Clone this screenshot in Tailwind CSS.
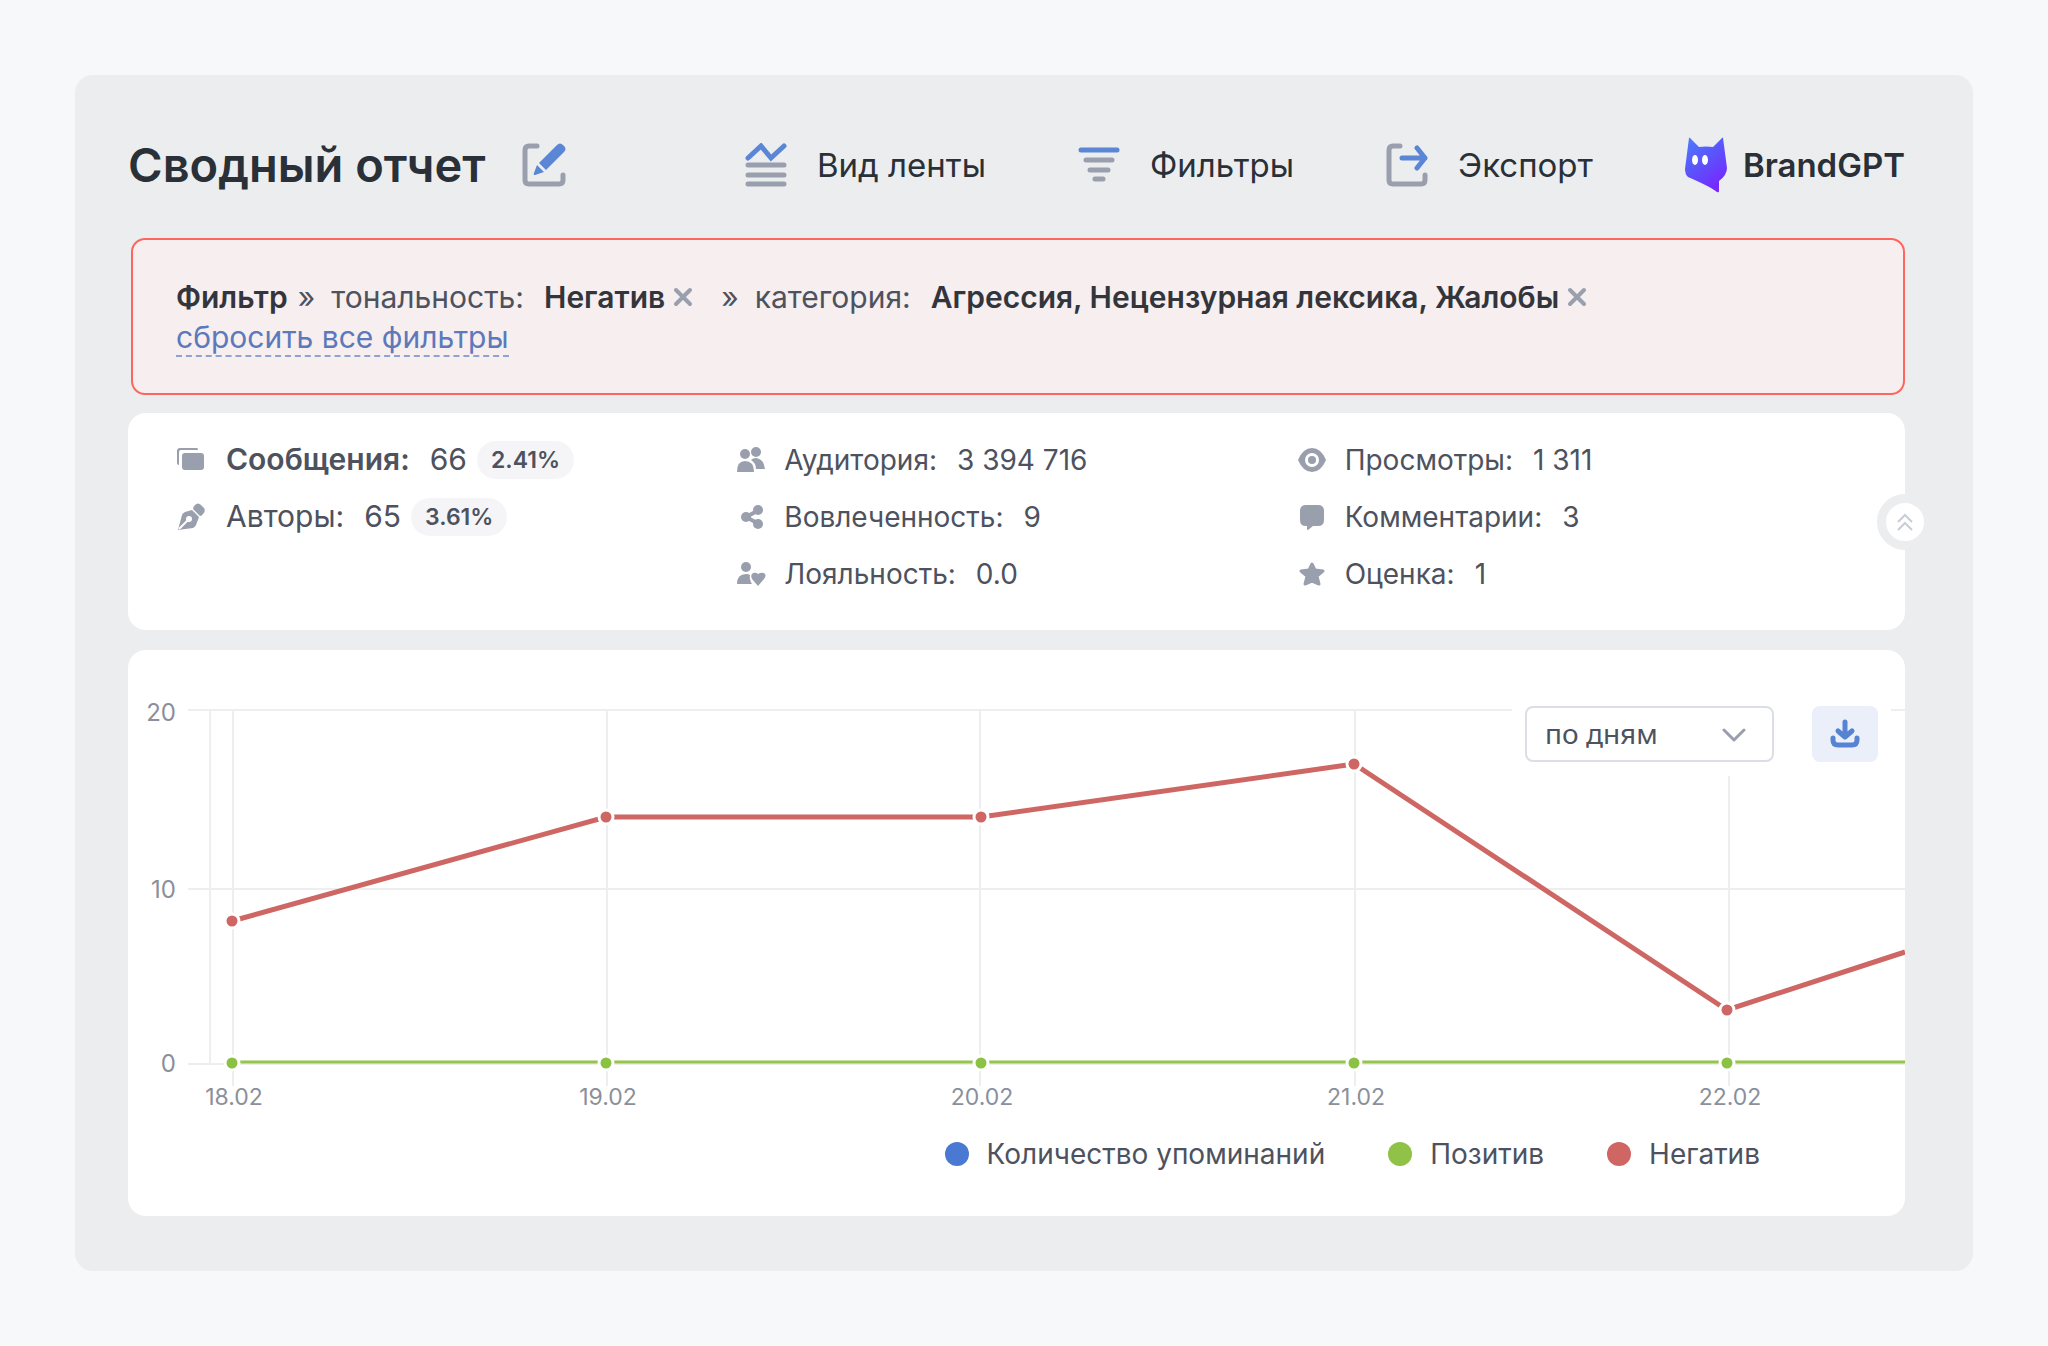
<!DOCTYPE html>
<html lang="ru">
<head>
  <meta charset="UTF-8" />
  <meta name="viewport" content="width=device-width, initial-scale=1.0" />
  <title>Сводный отчет</title>
  <script src="https://cdn.jsdelivr.net/npm/@tailwindcss/browser@4"></script>
</head>
<body class="bg-[#f7f8fa] p-[75px] font-['Inter','Liberation_Sans',sans-serif] text-[#4d525e]">

  <main class="bg-[#ecedef] rounded-[18px] pt-[45px] pb-[55px] pl-[53px] pr-[68px]">

    <!-- Header -->
    <header class="flex items-center justify-between h-[90px] mb-7 text-[#2a3037]">
      <div class="flex items-center gap-9">
        <h1 class="text-[47px] leading-[56px] font-semibold whitespace-nowrap">Сводный отчет</h1>
        <button type="button" aria-label="Редактировать">
          <svg class="w-11 h-11" viewBox="0 0 44 44" fill="none">
            <path d="M15 3H7Q3 3 3 7V37Q3 41 7 41H37Q41 41 41 37V32" stroke="#9a9fad" stroke-width="5" stroke-linecap="round" />
            <path d="M17 20L35 2Q38-1 41 2L42 3Q45 6 42 9L24 27Z" fill="#5b86d6" />
            <path d="M15 22L22 29L13 32Q11 32 12 30Z" fill="#5b86d6" />
          </svg>
        </button>
      </div>
      <nav class="flex items-center gap-[92px] text-[33px] leading-10 whitespace-nowrap">
        <button type="button" class="flex items-center gap-[30px]">
          <svg class="w-[42px] h-11" viewBox="0 0 42 44" fill="none" stroke-width="5" stroke-linecap="round">
            <path d="M3 15L16 3L26 15L39 3" stroke="#5b86d6" />
            <path d="M3 22H39M3 32H39M3 41H39" stroke="#9a9fad" />
          </svg>
          Вид ленты
        </button>
        <button type="button" class="flex items-center gap-[30px]">
          <svg class="w-[42px] h-9" viewBox="0 0 42 36" fill="none" stroke-width="5" stroke-linecap="round">
            <path d="M3 3H39" stroke="#5b86d6" />
            <path d="M8 13H34M12 23H30M17 32H25" stroke="#9a9fad" />
          </svg>
          Фильтры
        </button>
        <button type="button" class="flex items-center gap-[30px]">
          <svg class="w-[42px] h-11" viewBox="0 0 42 44" fill="none" stroke-width="5" stroke-linecap="round">
            <path d="M14 3H7Q3 3 3 7V37Q3 41 7 41H35Q39 41 39 37V32" stroke="#9a9fad" />
            <path d="M16 15H39M31 5L39 15L31 25" stroke="#5b86d6" stroke-linejoin="round" />
          </svg>
          Экспорт
        </button>
        <button type="button" class="flex items-center gap-4 font-semibold">
          <svg class="w-[42px] h-14" viewBox="0 0 42 56">
            <defs>
              <linearGradient id="cat" x1="0" y1="0" x2="0.6" y2="1">
                <stop offset="0" stop-color="#4c7dff" />
                <stop offset="0.5" stop-color="#5a55fb" />
                <stop offset="1" stop-color="#7529ff" />
              </linearGradient>
            </defs>
            <path d="M4 1Q4 0 5 1L14 10Q21 9 28 10L37 1Q38 0 38 1L42 31Q42 38 34 44V54Q34 56 32 55Q26 50 3 40Q0 37 0 32Z" fill="url(#cat)" />
            <ellipse cx="10" cy="23" rx="3" ry="5" fill="#fff" />
            <ellipse cx="20" cy="23" rx="3" ry="5" fill="#fff" />
          </svg>
          BrandGPT
        </button>
      </nav>
    </header>

    <!-- Active filters -->
    <section class="ml-[3px] h-[157px] border-2 border-[#fe655f] rounded-[14px] bg-[#f6eeef] pl-[43px] pr-6 pt-[37px] text-[30px] leading-10">
      <div class="flex items-center whitespace-nowrap">
        <b class="font-semibold text-[#33353d]">Фильтр</b>
        <span class="ml-[10px]">»</span>
        <span class="ml-4">тональность:</span>
        <b class="ml-5 font-semibold text-[#33353d]">Негатив</b>
        <button type="button" class="ml-2" aria-label="Убрать тональность">
          <svg class="w-5 h-5" viewBox="0 0 20 20" stroke="#9a9fad" stroke-width="4" stroke-linecap="round"><path d="M3 3L17 17M17 3L3 17" /></svg>
        </button>
        <span class="ml-7">»</span>
        <span class="ml-4">категория:</span>
        <b class="ml-5 font-semibold text-[#33353d]">Агрессия, Нецензурная лексика, Жалобы</b>
        <button type="button" class="ml-2" aria-label="Убрать категорию">
          <svg class="w-5 h-5" viewBox="0 0 20 20" stroke="#9a9fad" stroke-width="4" stroke-linecap="round"><path d="M3 3L17 17M17 3L3 17" /></svg>
        </button>
      </div>
      <a href="#" class="inline-block leading-9 text-[30px] text-[#5b79bb] border-b-2 border-dashed border-[#8ea2d4]">сбросить все фильтры</a>
    </section>

    <!-- Totals -->
    <section class="relative mt-[18px] h-[217px] bg-white rounded-[18px] px-12 pt-[18px] grid grid-cols-3 text-[28px]">
      <div class="text-[30px]">
        <div class="flex items-center h-[57px]">
          <svg class="w-[30px] h-[30px] mr-5" viewBox="0 0 30 30" fill="#9a9fad">
            <path d="M4 3H21Q22 3 22 5H5Q3 5 3 7V20Q1 20 1 18V6Q1 3 4 3Z" />
            <rect x="6" y="8" width="22" height="17" rx="3" />
          </svg>
          <span class="font-semibold">Сообщения:</span>
          <span class="ml-5">66</span>
          <span class="ml-[10px] rounded-full bg-[#f5f5f8] px-[14px] text-[23px] leading-[38px] font-semibold">2.41%</span>
        </div>
        <div class="flex items-center h-[57px]">
          <svg class="w-[30px] h-[30px] mr-5" viewBox="0 0 30 30">
            <path d="M2 28L6 13Q7 11 9 10L16 8L23 15L20 23Q19 25 17 26Z" fill="#9a9fad" />
            <path d="M17 7Q17 5 19 3Q22 0 25 3L28 6Q30 9 27 12Q26 14 24 14Z" fill="#9a9fad" />
            <path d="M3 27L12 18" stroke="#fff" stroke-width="2" />
            <circle cx="13" cy="17" r="3" fill="#fff" />
          </svg>
          <span>Авторы:</span>
          <span class="ml-5">65</span>
          <span class="ml-[10px] rounded-full bg-[#f5f5f8] px-[14px] text-[23px] leading-[38px] font-semibold">3.61%</span>
        </div>
      </div>
      <div>
        <div class="flex items-center h-[57px]">
          <svg class="w-[30px] h-[30px] mr-[18px]" viewBox="0 0 30 30" fill="#9a9fad">
            <circle cx="9" cy="9" r="5" />
            <path d="M1 27Q1 16 9 16Q18 16 18 27Z" />
            <circle cx="20" cy="7" r="5" />
            <path d="M15 15Q17 13 20 13Q28 14 29 24H20Q20 18 15 15Z" />
          </svg>
          <span>Аудитория:</span>
          <span class="ml-5">3 394 716</span>
        </div>
        <div class="flex items-center h-[57px]">
          <svg class="w-[30px] h-[30px] mr-[18px]" viewBox="0 0 30 30" fill="#9a9fad">
            <path d="M23 8L10 15L23 22" fill="none" stroke="#9a9fad" stroke-width="4" />
            <circle cx="22" cy="8" r="5" />
            <circle cx="10" cy="15" r="5" />
            <circle cx="22" cy="22" r="5" />
          </svg>
          <span>Вовлеченность:</span>
          <span class="ml-5">9</span>
        </div>
        <div class="flex items-center h-[57px]">
          <svg class="w-[30px] h-[30px] mr-[18px]" viewBox="0 0 30 30" fill="#9a9fad">
            <circle cx="10" cy="8" r="5" />
            <path d="M1 25Q1 15 10 15Q13 15 14 16Q13 20 16 25Z" />
            <path d="M22 27L16 20Q14 16 17 14Q20 13 22 15Q25 13 28 14Q31 16 28 20Z" />
          </svg>
          <span>Лояльность:</span>
          <span class="ml-5">0.0</span>
        </div>
      </div>
      <div>
        <div class="flex items-center h-[57px]">
          <svg class="w-[30px] h-[30px] mr-[18px]" viewBox="0 0 30 30" fill="#9a9fad">
            <path d="M1 15Q6 3 15 3Q24 3 29 15Q24 27 15 27Q6 27 1 15Z" />
            <circle cx="15" cy="15" r="7" fill="#fff" />
            <circle cx="15" cy="15" r="4" />
          </svg>
          <span>Просмотры:</span>
          <span class="ml-5">1 311</span>
        </div>
        <div class="flex items-center h-[57px]">
          <svg class="w-[30px] h-[30px] mr-[18px]" viewBox="0 0 30 30" fill="#9a9fad">
            <path d="M9 3H21Q27 3 27 9V18Q27 24 21 24H16L11 28Q10 28 10 27V24H9Q3 24 3 18V9Q3 3 9 3Z" />
          </svg>
          <span>Комментарии:</span>
          <span class="ml-5">3</span>
        </div>
        <div class="flex items-center h-[57px]">
          <svg class="w-[30px] h-[30px] mr-[18px]" viewBox="0 0 30 30" fill="#9a9fad" stroke="#9a9fad" stroke-width="3" stroke-linejoin="round">
            <path d="M15 5L18 11L26 12L20 17L22 25L15 22L8 25L10 17L4 12L12 11Z" />
          </svg>
          <span>Оценка:</span>
          <span class="ml-5">1</span>
        </div>
      </div>

      <button type="button" aria-label="Свернуть" class="absolute top-1/2 right-0 translate-x-1/2 -translate-y-1/2 w-14 h-14 rounded-full bg-white border-[9px] border-[#ecedef] flex items-center justify-center">
        <svg class="w-5 h-5" viewBox="0 0 20 20" fill="none" stroke="#c9ccd6" stroke-width="2"><path d="M3 10L10 3L17 10M3 18L10 11L17 18" /></svg>
      </button>
    </section>

    <!-- Chart -->
    <section class="relative mt-5 bg-white rounded-[18px] overflow-hidden">
      <svg class="block w-full h-auto" viewBox="0 0 1777 470" font-size="23" fill="none">
        <path d="M60 60H1777M60 239H1777M60 414H1777" stroke="#eeeeef" stroke-width="2" />
        <path d="M82 60V414M105 60V436M479 60V436M852 60V436M1227 60V436M1601 60V436" stroke="#eeeeef" stroke-width="2" />
        <g fill="#8b8f9a" text-anchor="end" font-size="24">
          <text x="48" y="71">20</text>
          <text x="48" y="248">10</text>
          <text x="48" y="422">0</text>
        </g>
        <g fill="#8b8f9a" text-anchor="middle">
          <text x="106" y="455">18.02</text>
          <text x="480" y="455">19.02</text>
          <text x="854" y="455">20.02</text>
          <text x="1228" y="455">21.02</text>
          <text x="1602" y="455">22.02</text>
        </g>
        <path d="M104 412H1777" stroke="#93c64a" stroke-width="3" />
        <path d="M104 271L478 167H853L1226 114L1599 360L1777 302" stroke="#ce6764" stroke-width="5" />
        <g fill="#8cc243" stroke="#fff" stroke-width="3">
          <circle cx="104" cy="413" r="7" />
          <circle cx="478" cy="413" r="7" />
          <circle cx="853" cy="413" r="7" />
          <circle cx="1226" cy="413" r="7" />
          <circle cx="1599" cy="413" r="7" />
        </g>
        <g fill="#ce6764" stroke="#fff" stroke-width="3">
          <circle cx="104" cy="271" r="7" />
          <circle cx="478" cy="167" r="7" />
          <circle cx="853" cy="167" r="7" />
          <circle cx="1226" cy="114" r="7" />
          <circle cx="1599" cy="360" r="7" />
        </g>
      </svg>

      <!-- Legend -->
      <ul class="flex justify-end gap-[63px] pt-[14px] pb-[42px] pr-[145px] text-[28px] leading-10">
        <li class="flex items-center gap-[18px]"><span class="w-6 h-6 rounded-full bg-[#4979d2]"></span>Количество упоминаний</li>
        <li class="flex items-center gap-[18px]"><span class="w-6 h-6 rounded-full bg-[#8fc246]"></span>Позитив</li>
        <li class="flex items-center gap-[18px]"><span class="w-6 h-6 rounded-full bg-[#cf6663]"></span>Негатив</li>
      </ul>

      <!-- Controls over the chart -->
      <div class="absolute top-11 right-[14px] flex gap-[38px] bg-white px-[13px] pt-3 pb-[14px]">
        <div class="relative">
          <select aria-label="Период" class="block appearance-none w-[249px] h-14 rounded-lg border-2 border-[#dcdee6] bg-white pl-[18px] pb-[2px] font-['Noto_Sans',sans-serif] text-[28px] leading-9 text-[#4d525e]">
            <option>по дням</option>
            <option>по неделям</option>
            <option>по месяцам</option>
          </select>
          <svg class="absolute right-7 top-5 w-6 h-4 pointer-events-none" viewBox="0 0 24 16" fill="none" stroke="#9a9fad" stroke-width="3" stroke-linecap="round" stroke-linejoin="round"><path d="M2 4L12 14L22 4" /></svg>
        </div>
        <button type="button" aria-label="Скачать" class="w-[66px] h-14 rounded-lg bg-[#ebeff9] flex items-center justify-center">
          <svg class="w-[30px] h-[30px]" viewBox="0 0 30 30" fill="none" stroke="#5783d3" stroke-width="5" stroke-linecap="round" stroke-linejoin="round">
            <path d="M15 3V17M8 12L15 18L22 12" />
            <path d="M3 19V21Q3 26 8 26H22Q27 26 27 21V19" />
          </svg>
        </button>
      </div>
    </section>
  </main>
</body>
</html>
